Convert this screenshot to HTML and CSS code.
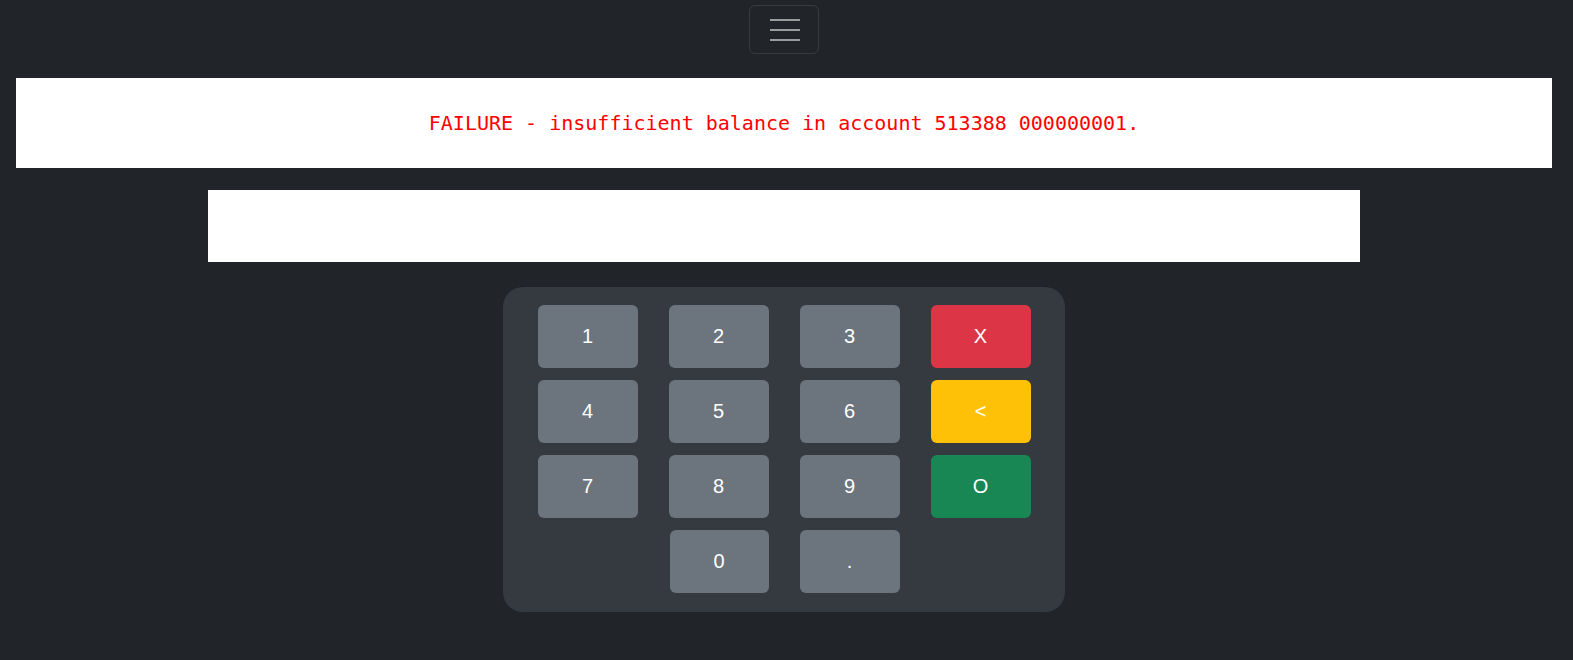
FILE: index.html
```html
<!DOCTYPE html>
<html lang="en">
<head>
<meta charset="utf-8">
<title>ATM</title>
<link rel="stylesheet" href="styles.css">
</head>
<body>
<div class="page">
  <nav class="nav">
    <button class="toggler" type="button" aria-label="Menu">
      <svg width="30" height="22" viewBox="0 0 30 22" aria-hidden="true">
        <rect x="0" y="0" width="30" height="2" fill="rgba(255,255,255,0.55)"/>
        <rect x="0" y="10" width="30" height="2" fill="rgba(255,255,255,0.55)"/>
        <rect x="0" y="20" width="30" height="2" fill="rgba(255,255,255,0.55)"/>
      </svg>
    </button>
  </nav>
  <div class="message">FAILURE - insufficient balance in account 513388 000000001.</div>
  <div class="display"></div>
  <div class="keypad">
    <div class="keys">
      <button class="key">1</button>
      <button class="key">2</button>
      <button class="key">3</button>
      <button class="key key-red">X</button>
      <button class="key">4</button>
      <button class="key">5</button>
      <button class="key">6</button>
      <button class="key key-yellow">&lt;</button>
      <button class="key">7</button>
      <button class="key">8</button>
      <button class="key">9</button>
      <button class="key key-green">O</button>
      <span></span>
      <button class="key key-zero">0</button>
      <button class="key">.</button>
      <span></span>
    </div>
  </div>
</div>
</body>
</html>
```
FILE: styles.css
```css
html, body {
  margin: 0;
  padding: 0;
  background: #212529;
}
body {
  font-family: "Liberation Sans", Arial, sans-serif;
}
.page {
  width: 1568px;
  display: flex;
  flex-direction: column;
  align-items: center;
}
.nav {
  padding-top: 5px;
  display: flex;
  justify-content: center;
}
.toggler {
  width: 70px;
  height: 49px;
  box-sizing: border-box;
  background: transparent;
  border: 1px solid rgba(255, 255, 255, 0.1);
  border-radius: 6px;
  display: flex;
  align-items: flex-start;
  justify-content: center;
  padding: 13px 0 0 1px;
}
.toggler svg {
  display: block;
}
.message {
  margin-top: 24px;
  width: 1536px;
  height: 90px;
  background: #fff;
  color: #ff0000;
  font-family: "DejaVu Sans Mono", "Liberation Mono", monospace;
  font-size: 20px;
  display: flex;
  align-items: center;
  justify-content: center;
}
.display {
  margin-top: 22px;
  width: 1152px;
  height: 72px;
  background: #fff;
}
.keypad {
  margin-top: 25px;
  width: 562px;
  box-sizing: border-box;
  padding: 18px 34px 19px;
  background: #343a40;
  border-radius: 20px;
}
.keys {
  display: grid;
  grid-template-columns: repeat(4, 100px);
  grid-auto-rows: 63px;
  column-gap: 31px;
  row-gap: 12px;
  justify-content: center;
}
.key {
  border: none;
  border-radius: 6px;
  background: #6c757d;
  color: #fff;
  font-family: "Liberation Sans", Arial, sans-serif;
  font-size: 20px;
  padding: 0;
}
.key-zero {
  margin-left: 1px;
}
.key-red {
  background: #dc3545;
}
.key-yellow {
  background: #ffc107;
}
.key-green {
  background: #198754;
}
```
